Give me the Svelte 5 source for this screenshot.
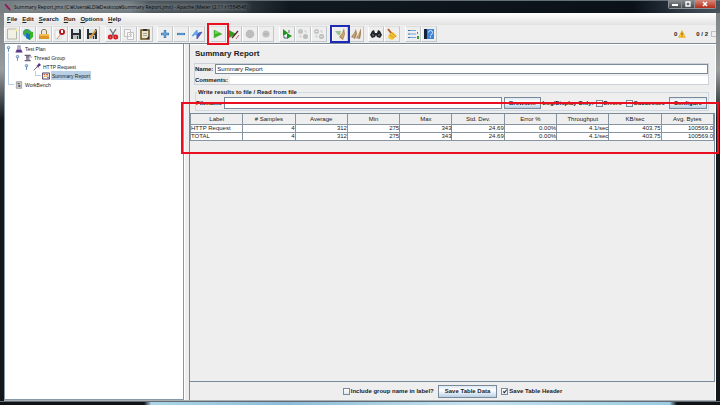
<script lang="ts">
	const menus = ['File', 'Edit', 'Search', 'Run', 'Options', 'Help'];

	const toolGroups = [
		['New', 'Templates', 'Open', 'Close', 'Save', 'Save as'],
		['Cut', 'Copy', 'Paste'],
		['Expand', 'Collapse', 'Toggle'],
		['Start', 'Start no pauses', 'Stop', 'Shutdown'],
		['Remote start', 'Remote stop', 'Remote shutdown'],
		['Clear', 'Clear all'],
		['Find', 'Reset search'],
		['Function helper', 'Help']
	];

	const nodes = [
		{ label: 'Test Plan', icon: 'plan', depth: 0, open: true },
		{ label: 'Thread Group', icon: 'threads', depth: 1, open: true },
		{ label: 'HTTP Request', icon: 'sampler', depth: 2, open: true },
		{ label: 'Summary Report', icon: 'report', depth: 3, open: false },
		{ label: 'WorkBench', icon: 'bench', depth: 0, open: false }
	];

	const columns = [
		'Label',
		'# Samples',
		'Average',
		'Min',
		'Max',
		'Std. Dev.',
		'Error %',
		'Throughput',
		'KB/sec',
		'Avg. Bytes'
	];

	const rows = [
		['HTTP Request', '4', '312', '275', '343', '24.69', '0.00%', '4.1/sec', '403.75', '100569.0'],
		['TOTAL', '4', '312', '275', '343', '24.69', '0.00%', '4.1/sec', '403.75', '100569.0']
	];

	let selected = $state('Summary Report');
	let name = $state('Summary Report');
	let filename = $state('');
	let errors = $state(false);
	let successes = $state(false);
	let groupName = $state(false);
	let header = $state(true);
</script>

{#snippet icon(type)}
	<svg viewBox="0 0 12 12" aria-hidden="true">
		{#if type === 'New'}
			<path d="M1.5 1h9v10h-9z" fill="#f3f1e4" stroke="#b5b4ac" />
			<path d="M8 1h3v3z" fill="#f4e58c" />
		{:else if type === 'Templates'}
			<circle cx="5" cy="5" r="4" fill="#4c9bd0" />
			<path d="M1 4l3-3 3 1-2 3-1 2-3-1z" fill="#42a83d" />
			<path d="M4 5l3-2 4 1v5l-3 3-4-2z" fill="#37b52c" />
			<path d="M4 5l4 1v6l-4-2z" fill="#1873b8" />
		{:else if type === 'Open'}
			<path d="M3.500 7V3l1-1.500h3l1 1.500v4" fill="#e8e6df" stroke="#8d7b55" />
			<path d="M1 6h10v5H1z" fill="#dc9526" />
			<path d="M1 6h10v2H1z" fill="#f4bd4d" />
		{:else if type === 'Close'}
			<path d="M1 2h6v9H1z" fill="#f7f7f7" stroke="#d6d6d6" />
			<circle cx="8" cy="4" r="3" fill="#b5141a" />
			<path d="M8 2v3" stroke="#fff" stroke-width="2" />
			<path d="M3 11l3-4" stroke="#c88d65" />
		{:else if type === 'Save' || type === 'Save as'}
			<path d="M1 1h9l1 1v9H1z" fill="#292e33" />
			<path d="M3 1h6v4H3z" fill="#d9e2e8" />
			<path d="M3 7h6v4H3z" fill="#bac0c4" />
			<path d="M7 8h1v3H7z" fill="#353535" />
			{#if type === 'Save as'}
				<path d="M4 10l6-8" stroke="#d39a38" stroke-width="2" />
			{/if}
		{:else if type === 'Cut'}
			<path d="M3 1l5 8M9 1L4 9" stroke="#68717a" stroke-width="1.3" />
			<g fill="none" stroke="#d51c24" stroke-width="2">
				<circle cx="3.3" cy="9" r="1.5" />
				<circle cx="8.7" cy="9" r="1.5" />
			</g>
		{:else if type === 'Copy'}
			<path d="M1.5 1.5h6v7h-6zM4.5 4.5h6v7h-6z" fill="#f7f7f7" stroke="#c2c2c2" />
			<path d="M6 6.5h3M6 8.5h3" stroke="#d0d0d0" />
		{:else if type === 'Paste'}
			<path d="M2 2h8v9H2z" fill="#e9e2cc" stroke="#69501d" stroke-width="1.5" />
			<path d="M4 1h4v2H4z" fill="#303030" />
			<path d="M4 5.5h4M4 7.5h4" stroke="#aaa994" />
			<path d="M7 11l3-3v3z" fill="#333" />
		{:else if type === 'Expand'}
			<path d="M2 6h8M6 2v8" stroke="#3f7fb9" stroke-width="2.4" />
			<path d="M3 6h6M6 3v6" stroke="#83b3db" stroke-width=".8" />
		{:else if type === 'Collapse'}
			<path d="M2 6h8" stroke="#3f7fb9" stroke-width="2.2" />
			<path d="M3 6h6" stroke="#83b3db" stroke-width=".8" />
		{:else if type === 'Toggle'}
			<path d="M1 8l5-6v3h2L6 7 5 6z" fill="#5eaaf0" stroke="#5a9be0" />
			<path d="M11 4l-5 7V7L8 5z" fill="#4a56c0" stroke="#525eb8" />
		{:else if type === 'Start'}
			<path d="M2 2l8 4-8 4z" fill="#36b51d" stroke="#68a85a" stroke-width=".5" />
			<path d="M3 3l4 2-4 1z" fill="#76d85c" />
		{:else if type === 'Start no pauses'}
			<path d="M1 2l7 4-7 4z" fill="#2c9e19" />
			<path d="M4 10l6-7" stroke="#5d252f" stroke-width="1.3" />
			<path d="M8 11l3-4" stroke="#b56b73" />
		{:else if type === 'Stop'}
			<circle cx="6" cy="6" r="4.3" fill="#bcbcbc" />
		{:else if type === 'Shutdown'}
			<circle cx="6" cy="6" r="3.6" fill="#c1c1c1" />
			<path d="M4 6h4" stroke="#aaa" />
		{:else if type === 'Remote start'}
			<path d="M2 1l5 4-5 3zM6 5l5 3-5 3z" fill="#19951b" />
			<path d="M3 8v2h3M8 2v3" fill="none" stroke="#4e6877" />
		{:else if type === 'Remote stop' || type === 'Remote shutdown'}
			<circle cx="3.5" cy="3.5" r="2.5" fill="#c3c3c3" />
			<circle cx="8.5" cy="8.5" r="2.5" fill="#bcbcbc" />
			<path d="M3 7v2h2M7 3h2v2" fill="none" stroke="#ccc" />
			{#if type === 'Remote shutdown'}
				<path d="M2.5 3.5h2M7.5 8.5h2" stroke="#eee" />
			{/if}
		{:else if type === 'Clear'}
			<path d="M1 3h6l-1 4H4z" fill="#9cc295" />
			<path d="M10 0L8 5 5 9l4 3 2-6z" fill="#b28a59" />
			<path d="M9 4L7 9M10 5l-2 5" stroke="#e3c493" stroke-width=".6" />
		{:else if type === 'Clear all'}
			<path d="M6 1L4 5 1 9l4 2 2-5zM11 0L9 5 6 10l4 1 1-5z" fill="#aa865c" />
			<path d="M5 5l-2 5M9 5l-1 5" stroke="#e0c69d" stroke-width=".7" />
		{:else if type === 'Find'}
			<path d="M2 3l2-1 1 3h2l1-3 2 1 2 4-2 3-3-1-1-2-1 2-3 1-2-3z" fill="#222529" />
			<path d="M2 7h2M8 7h2" stroke="#77838b" />
		{:else if type === 'Reset search'}
			<path d="M2 1l4 5" stroke="#b75d20" stroke-width="2" />
			<path d="M3 6l4-2 4 4-5 4-4-2z" fill="#f2c335" />
			<path d="M4 7l4 3M6 5l4 4" stroke="#cb8c25" stroke-width=".8" />
		{:else if type === 'Function helper'}
			<path d="M1 2.500h2M1 6h2M1 9.500h2" stroke="#426fa1" />
			<path d="M3 2.500h6M3 6h6M3 9.500h6" stroke="#71a6dc" />
			<path d="M10 4h1v2h-1z" fill="#4b87bb" />
			<path d="M10 8h2v3h-2z" fill="#36a02f" />
		{:else if type === 'Help'}
			<path d="M1 1h10v10H1z" fill="#3d84da" />
			<path d="M1 1h3v10H1z" fill="#10233b" />
			<path d="M5.500 4.500q0-2 2-2t2 2-2 2.500M7.500 8v1.500" fill="none" stroke="#d5e8ff" />
		{:else if type === 'plan'}
			<path d="M4 1h4v4l3 6H1l3-6z" fill="#bcb6d3" stroke="#736c93" stroke-width=".7" />
			<path d="M3 7h6l2 4H1z" fill="#5a358b" />
		{:else if type === 'threads'}
			<path d="M1 1h9v2H1zM3 3h5v6H3zM1 9h9v2H1z" fill="#666075" />
			<path d="M3 4.500h5M3 6.500h5M3 8.500h5" stroke="#bbb3cd" />
			<path d="M8 4h3v2" fill="none" stroke="#8c84a0" />
		{:else if type === 'sampler'}
			<path d="M1 11l6-6" stroke="#6d6688" stroke-width="1.5" />
			<path d="M6 4l3-4 3 3-4 3z" fill="#513180" />
			<path d="M5 4l4 4" stroke="#3f3557" />
		{:else if type === 'report'}
			<path d="M.5 1.500h11v9H.5z" fill="#fff" stroke="#4d3964" stroke-width="1.500" />
			<path d="M2 3h3v2H2zM6 3h3v2H6z" fill="#df6944" />
			<path d="M2 8l3-2 2 1 3-3" fill="none" stroke="#d59b2a" stroke-width="1.500" />
			<path d="M8 7h2v2H8z" fill="#4b3e9a" />
		{:else if type === 'bench'}
			<path d="M2 1h8v10H2z" fill="#d0d0d0" stroke="#8a8a8a" />
			<path d="M4 3h3v2H4zM5 6h3v3H5z" fill="#5d5768" />
		{/if}
	</svg>
{/snippet}

<div class="window">
	<header class="titlebar">
		<svg class="feather" viewBox="0 0 12 12" aria-hidden="true">
			<path d="M1 0l4 2 5 6 1 4-5-3-4-5z" fill="#b11f64" />
			<path d="M2 1l9 11" stroke="#41182e" />
		</svg>
		<span class="caption">
			Summary Report.jmx (C:₩Users₩LDI₩Desktop₩Summary Report.jmx) - Apache JMeter (2.11 r1554548)
		</span>
		<div class="controls">
			<button aria-label="Minimize"><svg viewBox="0 0 8 6"><path d="M1 4h6" stroke="#fff" stroke-width="2" /></svg></button>
			<button aria-label="Maximize"><svg viewBox="0 0 8 6"><path d="M2 1h4v4H2z" fill="none" stroke="#fff" stroke-width="1.300" /></svg></button>
			<button class="close" aria-label="Close"><svg viewBox="0 0 8 6"><path d="M2 1l4 4M6 1L2 5" stroke="#fff" stroke-width="1.500" /></svg></button>
		</div>
	</header>

	<div class="client">
		<nav class="menubar">
			{#each menus as menu}
				<button><u>{menu[0]}</u>{menu.slice(1)}</button>
			{/each}
		</nav>

		<div class="toolbar">
			<div class="tools">
				{#each toolGroups as group}
					<div class="group">
						{#each group as tool}
							<button
								class="tool"
								class:marked={tool === 'Start'}
								class:noted={tool === 'Clear'}
								aria-label={tool}
							>
								{@render icon(tool)}
							</button>
						{/each}
					</div>
				{/each}
			</div>
			<div class="status">
				<span>0</span>
				<svg class="warning" viewBox="0 0 12 12" aria-hidden="true">
					<path d="M6 1l5 10H1z" fill="#ffcf22" stroke="#e7a21c" stroke-linejoin="round" />
					<path d="M6 4v3.500M6 8.500V10" stroke="#6b3b0c" stroke-width="1.400" />
				</svg>
				<span class="threads">0 / 2</span>
				<i class="lamp"></i>
			</div>
		</div>

		<main>
			<ul class="tree">
				{#each nodes as node}
					<li style:--depth={node.depth}>
						<span class="toggle">
							{#if node.open}
								<svg viewBox="0 0 6 8" aria-hidden="true">
									<circle cx="3" cy="3" r="1.500" fill="#d7e7f5" stroke="#4d7ca9" />
									<path d="M3 4v4" stroke="#4d7ca9" />
								</svg>
							{:else}
								<i class:root={node.depth === 0}></i>
							{/if}
						</span>
						<span class="node-icon">{@render icon(node.icon)}</span>
						<button class:selected={selected === node.label} onclick={() => (selected = node.label)}>
							{node.label}
						</button>
					</li>
				{/each}
			</ul>
			<div class="divider"></div>

			<section class="panel">
				<h1>Summary Report</h1>
				<div class="naming">
					<div class="field">
						<label for="name">Name:</label>
						<input id="name" type="text" bind:value={name} />
					</div>
					<div class="field">
						<label for="comments">Comments:</label>
						<input id="comments" class="plain" type="text" />
					</div>
				</div>

				<fieldset>
					<legend>Write results to file / Read from file</legend>
					<div class="file-row">
						<label for="filename">Filename</label>
						<input id="filename" type="text" bind:value={filename} />
						<button class="push">Browse...</button>
						<span class="only">Log/Display Only:</span>
						<label class="check"><input type="checkbox" bind:checked={errors} />Errors</label>
						<label class="check"><input type="checkbox" bind:checked={successes} />Successes</label>
						<button class="push">Configure</button>
					</div>
				</fieldset>

				<div class="results">
					<table>
						<thead>
							<tr>
								{#each columns as column}
									<th>{column}</th>
								{/each}
							</tr>
						</thead>
						<tbody>
							{#each rows as row}
								<tr>
									{#each row as cell}
										<td>{cell}</td>
									{/each}
								</tr>
							{/each}
						</tbody>
					</table>
					<div class="outline"></div>
				</div>

				<footer>
					<label class="check"><input type="checkbox" bind:checked={groupName} />Include group name in label?</label>
					<button class="push">Save Table Data</button>
					<label class="check"><input type="checkbox" bind:checked={header} />Save Table Header</label>
				</footer>
			</section>
		</main>
	</div>
	<div class="taskbar"></div>
</div>

<style>
	:global(body) {
		margin: 0;
		background: #11161b;
	}

	.window {
		box-sizing: border-box;
		min-height: 100vh;
		display: flex;
		flex-direction: column;
		overflow: hidden;
		background: linear-gradient(#777d80, #9a9d9e 70px, #30363a 108px, #14181b 120px);
		color: #222;
		font: bold 6px/8px 'Liberation Sans', Arial, sans-serif;
	}

	button,
	input {
		box-sizing: border-box;
		margin: 0;
		padding: 0;
		border: 0;
		background: none;
		color: inherit;
		font: inherit;
	}

	svg {
		display: block;
	}

	.titlebar {
		height: 13px;
		display: flex;
		align-items: center;
		gap: 3px;
		padding-left: 4px;
		background: linear-gradient(90deg, #777f83, #717a7f 130px, #4a5257 150px, #3d454b 220px, #101820 290px, #0a1119 88%, #35414d 96%, #4a5259);
		box-shadow: inset 0 1px #647078;
		white-space: nowrap;
	}

	.feather {
		width: 7px;
		height: 8px;
	}

	.caption {
		border-radius: 4px;
		background: rgb(160 170 176 / 25%);
		box-shadow: 0 0 4px 1px rgb(160 170 176 / 25%);
		color: #080b0d;
		font: 5px/6px 'Open Sans', 'Noto Sans CJK KR', sans-serif;
	}

	.controls {
		display: flex;
		align-self: flex-start;
		margin-left: auto;
		margin-right: 4px;
		border: 1px solid #8d9296;
		border-top: 0;
		border-radius: 0 0 2px 2px;

		& button {
			width: 13px;
			height: 8px;
			display: grid;
			place-items: center;
			border-right: 1px solid #8b8f92;
			background: linear-gradient(#8b8f93, #43484d);
		}

		& svg {
			width: 8px;
			height: 6px;
		}

		& .close {
			width: 20px;
			border: 0;
			background: linear-gradient(#d68b7c, #b52c1a);
		}
	}

	.client {
		flex: 1;
		display: flex;
		flex-direction: column;
		margin: 0 4px;
		border-bottom: 1px solid #aab0b3;
		background: #eee;
	}

	.menubar {
		height: 12px;
		display: flex;
		align-items: center;
		gap: 5px;
		padding-left: 3px;
		background: linear-gradient(#fff, #e2e2e2);
	}

	.toolbar {
		height: 18px;
		display: flex;
		justify-content: space-between;
		align-items: center;
		border-bottom: 1px solid #7a8a99;
	}

	.tools {
		width: 433px;
		display: flex;
		justify-content: space-between;
	}

	.group {
		display: flex;
	}

	.tool {
		position: relative;
		width: 16px;
		height: 16px;
		display: grid;
		place-items: center;
		border: 1px solid #c2c7ca;
		border-left-color: #fff;
		border-top-color: #ddd;

		& svg {
			width: 12px;
			height: 12px;
		}
	}

	.marked::after,
	.noted::after {
		content: '';
		position: absolute;
		z-index: 1;
		inset: -4px;
		border: 2px solid #e90e20;
	}

	.noted::after {
		inset: -2px -3px;
		border-color: #1d2bb5;
	}

	.status {
		display: flex;
		align-items: center;
		gap: 1px;
		overflow: hidden;
		white-space: nowrap;
	}

	.warning {
		width: 8px;
		height: 8px;
	}

	.threads {
		margin-left: 9px;
	}

	.lamp {
		width: 4px;
		height: 4px;
		margin-left: 2px;
		border: 1px solid #b8bfc5;
		border-right: 0;
	}

	main {
		flex: 1;
		display: grid;
		grid-template-columns: 180px 6px minmax(0, 1fr);
	}

	.tree {
		margin: 0;
		padding: 0 0 0 1px;
		list-style: none;
		border: 1px solid #8797a5;
		border-top: 0;
		background: #fff;
		color: #222;
		font: 5px/8px 'Liberation Sans', Arial, sans-serif;

		& li {
			height: 9px;
			display: flex;
			align-items: center;
			padding-left: calc(var(--depth) * 9px);
		}

		& button {
			height: 9px;
			padding: 0 1px;
		}

		& .selected {
			background: #b8cfe5;
		}
	}

	.toggle {
		width: 8px;

		& svg {
			width: 5px;
			height: 7px;
		}

		& i {
			display: block;
			margin-left: 2px;
			height: 4px;
			margin-bottom: 4px;
			border-left: 1px solid #b8cfe5;
			border-bottom: 1px solid #b8cfe5;
		}

		& .root {
			height: 31px;
			margin-bottom: 31px;
		}
	}

	.node-icon {
		width: 10px;
		display: grid;
		place-items: center;

		& svg {
			width: 8px;
			height: 8px;
		}
	}

	.divider {
		border-left: 1px solid #fff;
		border-right: 1px solid #7a8a99;
		background: radial-gradient(circle, #b4bec6 25%, #eee 30%) 0 0 / 2px 2px;
	}

	.panel {
		display: flex;
		flex-direction: column;
		border-top: 1px solid #fff;
		border-right: 1px solid #fff;
	}

	h1 {
		margin: 4px 5px;
		font-size: 8px;
		line-height: 10px;
	}

	.naming {
		margin: 0 6px 3px 4px;
		border: 1px solid #ccd2d7;
	}

	.field {
		height: 10px;
		display: flex;
		align-items: center;
		gap: 2px;

		& + .field {
			margin-top: 2px;
			height: 8px;
		}

		& input {
			flex: 1;
			height: 100%;
			padding-left: 1px;
			border: 1px solid #7a8a99;
			background: #fff;
			font-weight: normal;
		}

		& .plain {
			border: 0;
		}
	}

	fieldset {
		margin: 0 6px 2px 5px;
		padding: 1px 1px 1px 0;
		min-width: 0;
		border: 1px solid #ccdae6;
	}

	legend {
		margin-left: 1px;
		padding: 0 1px;
	}

	.file-row {
		display: flex;
		align-items: center;
		gap: 2px;
		white-space: nowrap;

		& > input {
			flex: 1;
			min-width: 0;
			height: 12px;
			border: 1px solid #7a8a99;
			background: #fff;
		}
	}

	.push {
		height: 13px;
		padding: 0 6px;
		border: 1px solid #7a8a99;
		background: linear-gradient(#dce8f3, #fff 40%, #b8cfe5);
		white-space: nowrap;
	}

	.file-row .push {
		height: 12px;
		padding: 0 4px;
	}

	.check {
		display: flex;
		align-items: center;
		gap: 1px;

		& input {
			appearance: none;
			width: 7px;
			height: 7px;
			border: 1px solid #7a8a99;
			background: linear-gradient(#fff, #dce8f3);
		}

		& input:checked::before {
			content: '';
			display: block;
			width: 1px;
			height: 3px;
			margin-left: 2px;
			border: solid #222;
			border-width: 0 1px 1px 0;
			transform: rotate(40deg);
		}
	}

	.file-row .check {
		margin-right: 2px;
	}

	.results {
		position: relative;
		flex: 1;
		border: 1px solid #7a8a99;
		border-left: 0;
	}

	table {
		width: 100%;
		table-layout: fixed;
		border-collapse: collapse;
		font-weight: normal;
	}

	th,
	td {
		padding: 0;
		border: 1px solid #8795a2;
		line-height: 7px;
		white-space: nowrap;
	}

	th {
		height: 10px;
		border-top: 0;
		font-weight: normal;
	}

	td {
		height: 7px;
		background: #fff;
		text-align: right;
	}

	td:first-child {
		text-align: left;
	}

	.outline {
		position: absolute;
		z-index: 2;
		top: -12px;
		left: -9px;
		right: -5px;
		height: 48px;
		border: 2px solid #e90e20;
	}

	footer {
		height: 18px;
		display: flex;
		align-items: center;
		justify-content: center;
		gap: 4px;
	}

	.taskbar {
		height: 4px;
		background: linear-gradient(90deg, #101316 20%, #acd5e8 21%, #8dbbd7 40%, #c4e3f1 65%, #9bcbe2 93%, #101316 94%);
		box-shadow: inset 0 1px #626c72;
	}
</style>
